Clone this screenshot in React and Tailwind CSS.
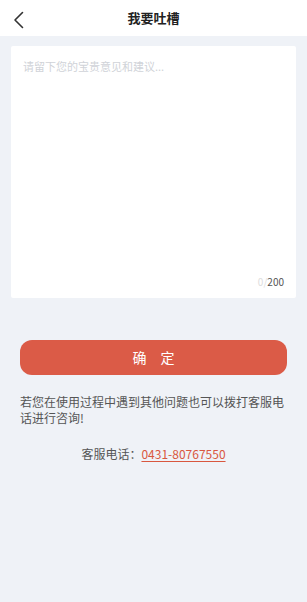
import React, { useState } from 'react';

const App = () => {
    const [text, setText] = useState('');

    return (
        <div className="min-h-screen w-full bg-[#eff2f7]" style={{ fontFamily: '"Noto Sans CJK SC", "Noto Sans", sans-serif' }}>
            {/* Header */}
            <div className="relative h-[36px] bg-white flex items-center justify-center">
                <svg className="absolute left-[13px] top-[11px]" width="12" height="18" viewBox="0 0 12 18" fill="none">
                    <path d="M9.5 1.5 L2 9 L9.5 16.5" stroke="#333" strokeWidth="1.6" strokeLinecap="round" strokeLinejoin="round" />
                </svg>
                <span className="text-[13px] font-bold text-[#222]">我要吐槽</span>
            </div>

            {/* Textarea card */}
            <div className="mx-[11px] mt-[10px] h-[252px] bg-white rounded-[2px] flex flex-col px-[12px] pt-[12px] pb-[9px]">
                <textarea
                    value={text}
                    onChange={(e) => setText(e.target.value.slice(0, 200))}
                    placeholder="请留下您的宝贵意见和建议..."
                    className="flex-1 w-full resize-none outline-none text-[11px] leading-[16px] text-[#333] placeholder:text-[#d0d3d8]"
                />
                <div className="text-right text-[10px] leading-[14px] text-[#555]">
                    <span className="text-[#ddd]">{text.length}/</span>200
                </div>
            </div>

            {/* Submit */}
            <div className="px-[20px] mt-[42px]">
                <button className="w-full h-[35px] rounded-[12px] bg-[#db5b47] text-white text-[14px] tracking-[14px] pl-[14px]">
                    确定
                </button>
            </div>

            <p className="px-[20px] mt-[19px] text-[12px] leading-[16px] text-[#555]">
                若您在使用过程中遇到其他问题也可以拨打客服电话进行咨询!
            </p>

            <div className="mt-[19px] text-center text-[12px] leading-[18px] text-[#555]">
                客服电话：<span className="text-[#d9573f] underline underline-offset-2">0431-80767550</span>
            </div>
        </div>
    );
};

export default App;
